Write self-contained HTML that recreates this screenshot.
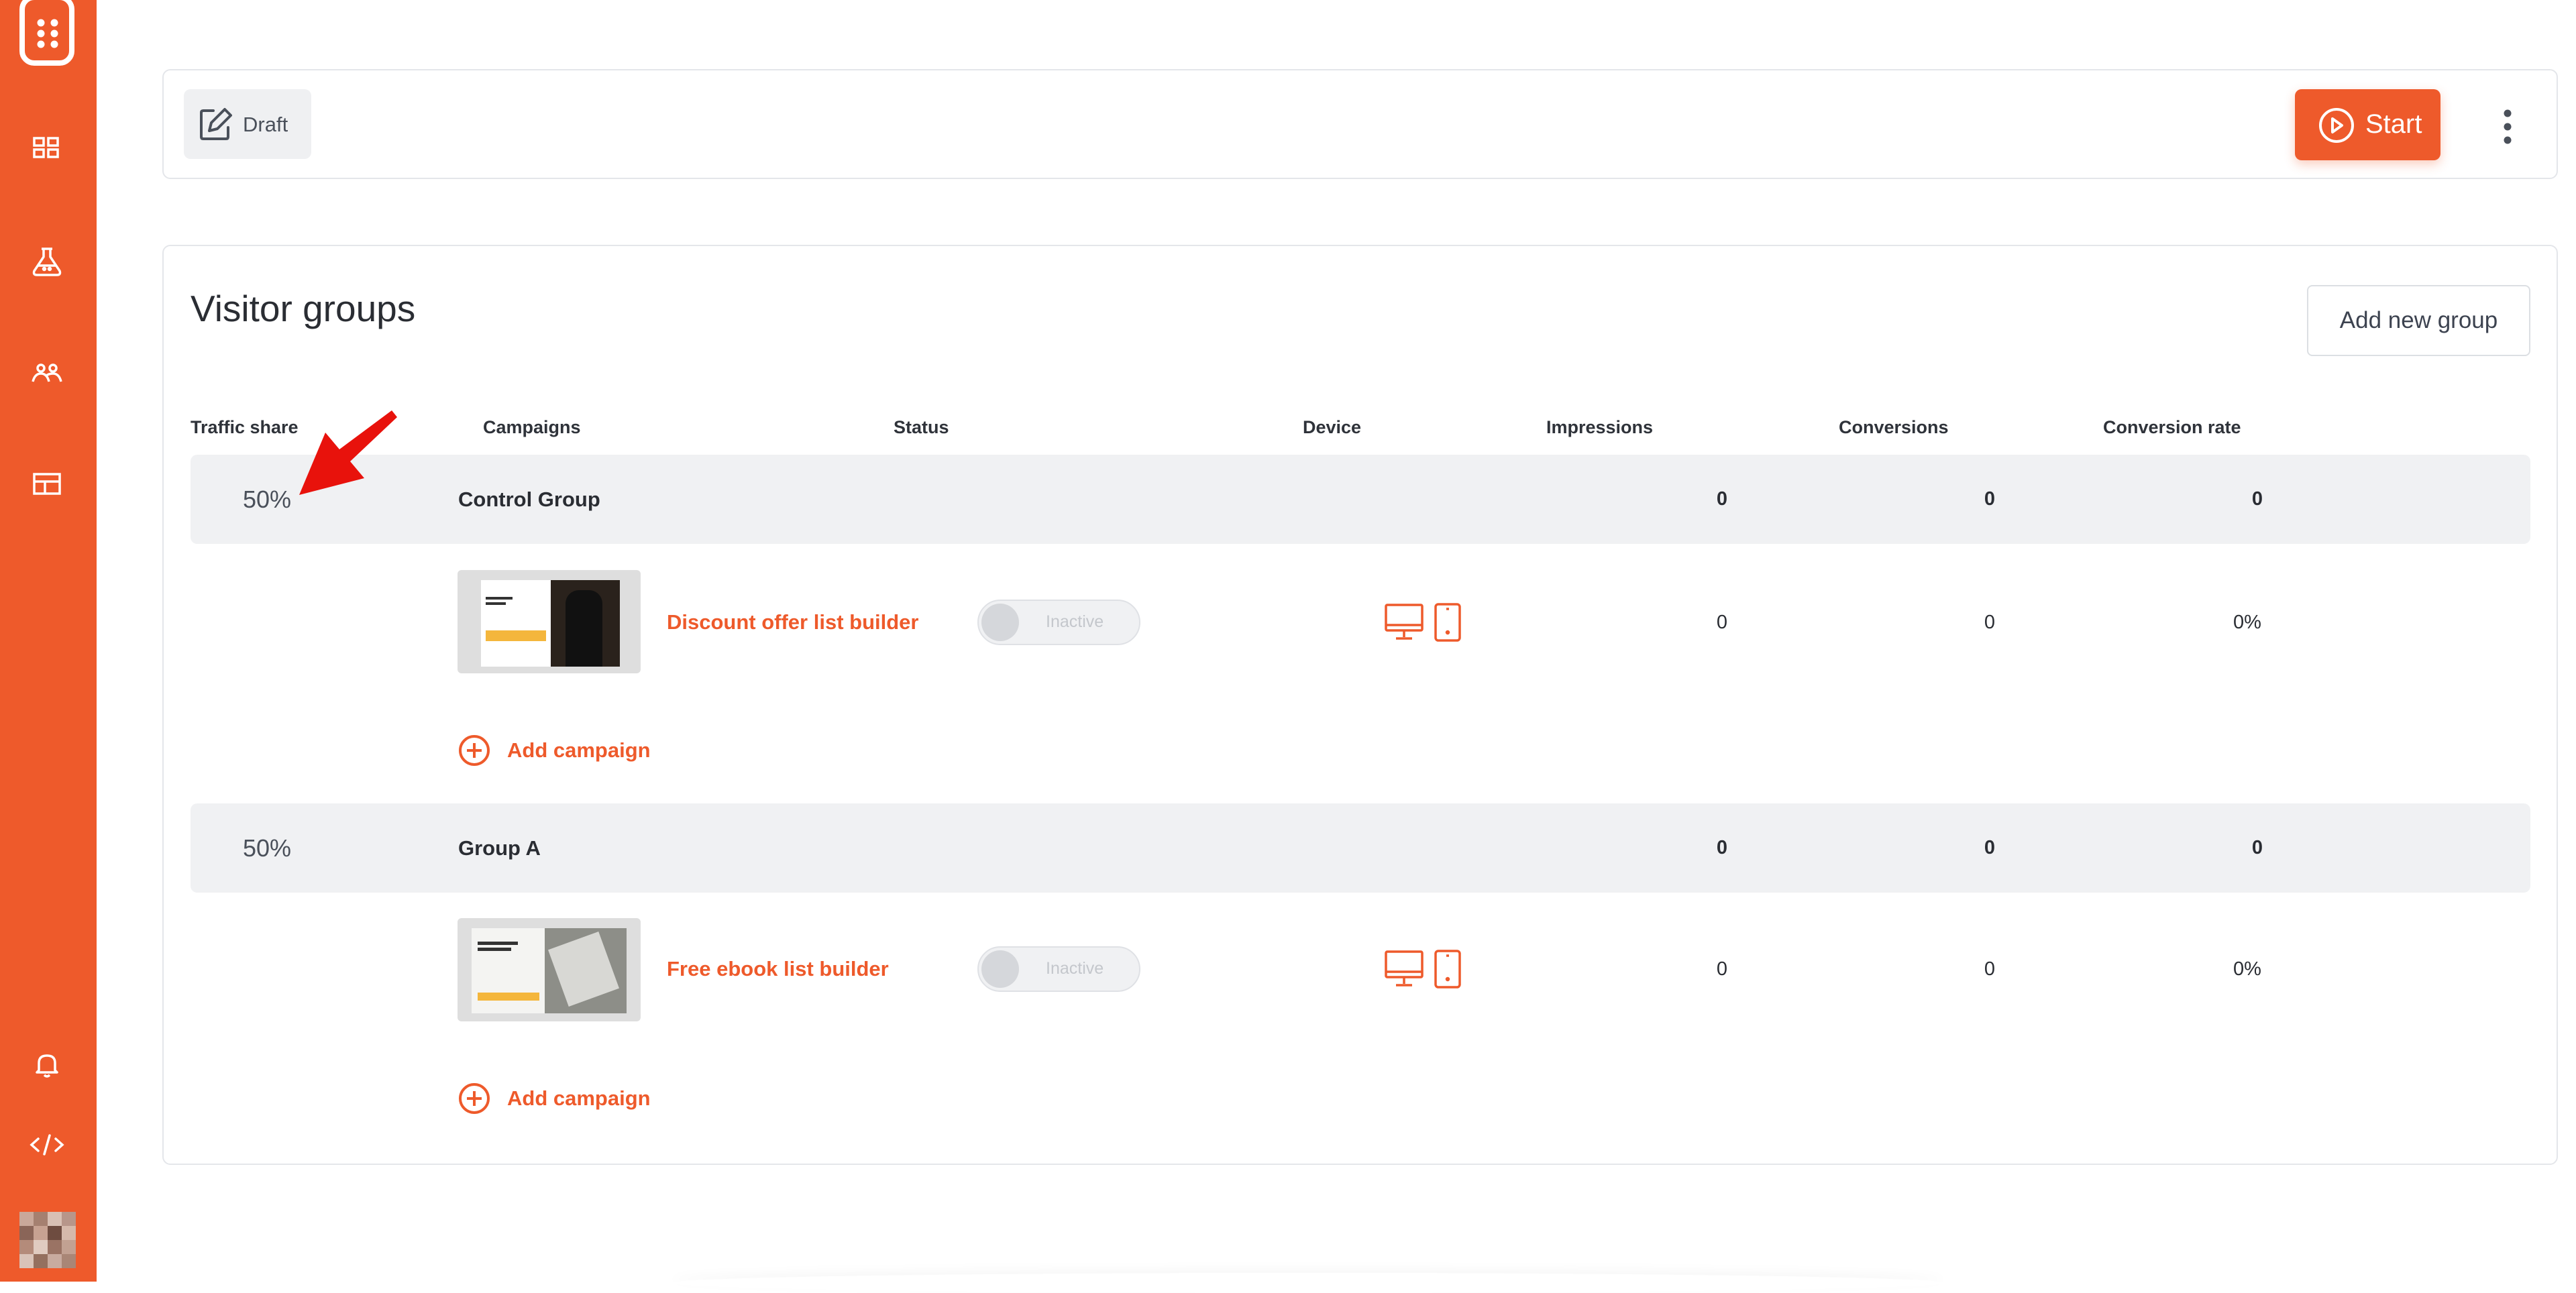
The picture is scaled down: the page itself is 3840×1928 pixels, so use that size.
<!DOCTYPE html>
<html><head><meta charset="utf-8"><style>
*{margin:0;padding:0;box-sizing:border-box}
body{width:3840px;height:1911px;background:#fff;font-family:"Liberation Sans",Arial,sans-serif;position:relative;overflow:hidden;color:#2a2d33}
.a{position:absolute}
.side{left:0;top:0;width:144px;height:1911px;background:#ee5a2b}
.card{border:2px solid #e4e6ea;border-radius:12px;background:#fff}
.hdr{top:622px;font-size:27px;font-weight:bold;color:#2f333a;line-height:30px}
.grp{left:284px;width:3488px;height:133px;background:#f0f1f3;border-radius:10px}
.pct{font-size:36px;color:#4a505a;line-height:40px}
.gname{font-size:31px;font-weight:bold;color:#2a2d33;line-height:36px}
.num{font-size:29px;color:#2a2d33;line-height:34px;width:80px;text-align:center}
.numb{font-weight:bold}
.cname{font-size:31px;color:#ee5a2b;font-weight:bold;line-height:36px}
.tog{width:243px;height:68px;border-radius:34px;background:#f0f1f3;border:2px solid #dfe1e5}
.tog i{position:absolute;left:4px;top:4px;width:56px;height:56px;border-radius:50%;background:#d5d7db}
.tog span{position:absolute;left:100px;top:17px;font-size:25px;color:#c4c7cc}
.addc{font-size:31px;color:#ee5a2b;font-weight:bold;line-height:36px}
.thumb{width:273px;height:154px;background:#dedede;border-radius:6px}
</style></head><body>
<div class="a side"></div>
<!-- logo -->
<div class="a" style="left:29px;top:-8px;width:82px;height:106px;border:8px solid #fff;border-radius:22px;background:#ee5a2b"></div>
<svg class="a" style="left:53px;top:26px" width="36" height="48"><g fill="#fff"><circle cx="8" cy="8" r="5.5"/><circle cx="28" cy="8" r="5.5"/><circle cx="8" cy="24" r="5.5"/><circle cx="28" cy="24" r="5.5"/><circle cx="8" cy="40" r="5.5"/><circle cx="28" cy="40" r="5.5"/></g></svg>
<!-- sidebar icons -->
<svg class="a" style="left:48px;top:204px" width="44" height="32" fill="none" stroke="#fff" stroke-width="3.5"><rect x="3" y="2" width="14" height="11"/><rect x="24" y="2" width="14" height="11"/><rect x="3" y="19" width="14" height="11"/><rect x="24" y="19" width="14" height="11"/></svg>
<svg class="a" style="left:46px;top:368px" width="48" height="46" fill="none" stroke="#fff" stroke-width="3.5" stroke-linejoin="round"><path d="M16 3h16M19 3v12L5 36q-2 6 4 6h30q6 0 4-6L29 15V3"/><path d="M11 28h26"/><circle cx="20" cy="33" r="1.5" fill="#fff"/><circle cx="28" cy="33" r="1.5" fill="#fff"/></svg>
<svg class="a" style="left:46px;top:541px" width="48" height="30" fill="none" stroke="#fff" stroke-width="3.5"><circle cx="15" cy="8" r="5"/><circle cx="33" cy="8" r="5"/><path d="M3 28q3-12 12-12t12 12M22 20q4-4 11-4 9 0 12 12"/></svg>
<svg class="a" style="left:48px;top:705px" width="44" height="34" fill="none" stroke="#fff" stroke-width="3.5"><rect x="3" y="2" width="38" height="29"/><path d="M3 13h38M19 13v18"/></svg>
<svg class="a" style="left:52px;top:1568px" width="36" height="40" fill="none" stroke="#fff" stroke-width="3.5" stroke-linejoin="round"><path d="M6 28V17q0-11 12-11t12 11v11l3 3H3z"/><path d="M14 35q4 4 8 0"/></svg>
<svg class="a" style="left:44px;top:1690px" width="52" height="34" fill="none" stroke="#fff" stroke-width="3.5" stroke-linecap="round"><path d="M13 8L3 17l10 9M39 8l10 9-10 9M30 3L22 31"/></svg>
<div class="a" style="left:29px;top:1807px;width:84px;height:84px;display:grid;grid-template-columns:repeat(4,1fr)">
<i style="background:#c9a89a"></i><i style="background:#a58070"></i><i style="background:#d8c0b4"></i><i style="background:#b7968a"></i>
<i style="background:#8a6558"></i><i style="background:#c7a292"></i><i style="background:#6e4c40"></i><i style="background:#d5b9ab"></i>
<i style="background:#b48b7a"></i><i style="background:#e0cbc0"></i><i style="background:#9a7364"></i><i style="background:#c2a192"></i>
<i style="background:#d9c3b8"></i><i style="background:#94705f"></i><i style="background:#c8ab9f"></i><i style="background:#a98676"></i></div>

<!-- top card -->
<div class="a card" style="left:242px;top:103px;width:3571px;height:164px"></div>
<div class="a" style="left:274px;top:133px;width:190px;height:104px;background:#eff0f2;border-radius:10px"></div>
<svg class="a" style="left:296px;top:160px" width="52" height="52" fill="none" stroke="#4a505a" stroke-width="4" stroke-linejoin="round" stroke-linecap="round"><path d="M22 5H7q-3 0-3 3v36q0 3 3 3h34q3 0 3-3V30"/><path d="M39 3l9 9-20 20-12 3 3-12z"/></svg>
<div class="a" style="left:362px;top:168px;font-size:31px;color:#4a505a">Draft</div>
<div class="a" style="left:3421px;top:133px;width:217px;height:106px;background:#ee5a2b;border-radius:10px;box-shadow:0 6px 16px rgba(238,90,43,.3)"></div>
<svg class="a" style="left:3455px;top:159px" width="56" height="56" fill="none" stroke="#fff" stroke-width="4" stroke-linejoin="round"><circle cx="28" cy="28" r="24"/><path d="M22 18l14 10-14 10z"/></svg>
<div class="a" style="left:3526px;top:163px;font-size:40px;color:#fff">Start</div>
<svg class="a" style="left:3728px;top:158px" width="20" height="64" fill="#4a505a"><circle cx="10" cy="11" r="5.5"/><circle cx="10" cy="31" r="5.5"/><circle cx="10" cy="51" r="5.5"/></svg>

<!-- visitor card -->
<div class="a card" style="left:242px;top:365px;width:3571px;height:1372px"></div>
<div class="a" style="left:284px;top:428px;font-size:55px;color:#2a2d33">Visitor groups</div>
<div class="a" style="left:3439px;top:425px;width:333px;height:106px;border:2px solid #dcdfe3;border-radius:8px;font-size:35px;color:#3d4350;text-align:center;line-height:102px">Add new group</div>

<div class="a hdr" style="left:284px">Traffic share</div>
<div class="a hdr" style="left:720px">Campaigns</div>
<div class="a hdr" style="left:1332px">Status</div>
<div class="a hdr" style="left:1942px">Device</div>
<div class="a hdr" style="left:2305px">Impressions</div>
<div class="a hdr" style="left:2741px">Conversions</div>
<div class="a hdr" style="left:3135px">Conversion rate</div>

<!-- group 1 -->
<div class="a grp" style="top:678px"></div>
<div class="a pct" style="left:362px;top:725px">50%</div>
<div class="a gname" style="left:683px;top:727px">Control Group</div>
<div class="a num numb" style="left:2527px;top:727px">0</div>
<div class="a num numb" style="left:2926px;top:727px">0</div>
<div class="a num numb" style="left:3325px;top:727px">0</div>

<div class="a thumb" style="left:682px;top:850px"></div>
<div class="a" style="left:717px;top:865px;width:104px;height:129px;background:#fff"></div>
<div class="a" style="left:821px;top:865px;width:103px;height:129px;background:#2a221c"></div>
<div class="a" style="left:843px;top:880px;width:55px;height:114px;background:#111;border-radius:20px 20px 0 0"></div>
<div class="a" style="left:724px;top:890px;width:40px;height:4px;background:#333"></div>
<div class="a" style="left:724px;top:898px;width:30px;height:4px;background:#333"></div>
<div class="a" style="left:724px;top:940px;width:90px;height:16px;background:#f4b63c"></div>
<div class="a cname" style="left:994px;top:910px">Discount offer list builder</div>
<div class="a tog" style="left:1457px;top:894px"><i></i><span>Inactive</span></div>
<svg class="a" style="left:2063px;top:898px" width="120" height="60" fill="none" stroke="#ee5a2b" stroke-width="3.5"><rect x="3" y="4" width="54" height="38" rx="2"/><path d="M3 34h54M30 42v10M18 54h24"/><rect x="77" y="3" width="36" height="54" rx="4"/><circle cx="95" cy="45" r="1.5" fill="#ee5a2b"/><path d="M93 10h4"/></svg>
<div class="a num" style="left:2527px;top:911px">0</div>
<div class="a num" style="left:2926px;top:911px">0</div>
<div class="a num" style="left:3310px;top:911px">0%</div>

<svg class="a" style="left:683px;top:1095px" width="48" height="48" fill="none" stroke="#ee5a2b" stroke-width="4"><circle cx="24" cy="24" r="21"/><path d="M24 13v22M13 24h22"/></svg>
<div class="a addc" style="left:756px;top:1101px">Add campaign</div>

<!-- group 2 -->
<div class="a grp" style="top:1198px"></div>
<div class="a pct" style="left:362px;top:1245px">50%</div>
<div class="a gname" style="left:683px;top:1247px">Group A</div>
<div class="a num numb" style="left:2527px;top:1247px">0</div>
<div class="a num numb" style="left:2926px;top:1247px">0</div>
<div class="a num numb" style="left:3325px;top:1247px">0</div>

<div class="a thumb" style="left:682px;top:1369px"></div>
<div class="a" style="left:703px;top:1384px;width:231px;height:127px;background:#f4f4f2"></div>
<div class="a" style="left:812px;top:1384px;width:122px;height:127px;background:#8d8e88"></div>
<div class="a" style="left:830px;top:1400px;width:80px;height:90px;background:#d8d8d4;transform:rotate(-20deg)"></div>
<div class="a" style="left:712px;top:1404px;width:60px;height:5px;background:#333"></div>
<div class="a" style="left:712px;top:1413px;width:50px;height:5px;background:#333"></div>
<div class="a" style="left:712px;top:1480px;width:92px;height:12px;background:#f4b63c"></div>
<div class="a cname" style="left:994px;top:1427px">Free ebook list builder</div>
<div class="a tog" style="left:1457px;top:1411px"><i></i><span>Inactive</span></div>
<svg class="a" style="left:2063px;top:1415px" width="120" height="60" fill="none" stroke="#ee5a2b" stroke-width="3.5"><rect x="3" y="4" width="54" height="38" rx="2"/><path d="M3 34h54M30 42v10M18 54h24"/><rect x="77" y="3" width="36" height="54" rx="4"/><circle cx="95" cy="45" r="1.5" fill="#ee5a2b"/><path d="M93 10h4"/></svg>
<div class="a num" style="left:2527px;top:1428px">0</div>
<div class="a num" style="left:2926px;top:1428px">0</div>
<div class="a num" style="left:3310px;top:1428px">0%</div>

<svg class="a" style="left:683px;top:1614px" width="48" height="48" fill="none" stroke="#ee5a2b" stroke-width="4"><circle cx="24" cy="24" r="21"/><path d="M24 13v22M13 24h22"/></svg>
<div class="a addc" style="left:756px;top:1620px">Add campaign</div>

<!-- red arrow -->
<svg class="a" style="left:0;top:0" width="700" height="800"><polygon points="446,738 485,645 506,670 584,612 592,622 522,688 543,713" fill="#e8120c"/></svg>
<div class="a" style="left:1000px;top:1898px;width:1900px;height:30px;border-radius:50%;box-shadow:0 -6px 16px rgba(0,0,0,.035)"></div>
</body></html>
